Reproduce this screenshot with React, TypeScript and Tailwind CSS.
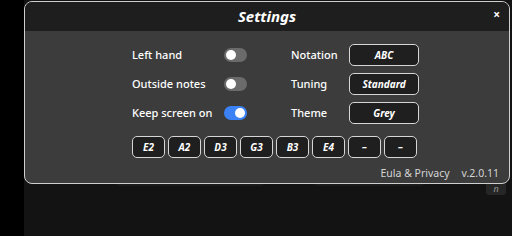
const toggles = [
  { label: "Left hand", on: false, right: "Notation", value: "ABC" },
  { label: "Outside notes", on: false, right: "Tuning", value: "Standard" },
  { label: "Keep screen on", on: true, right: "Theme", value: "Grey" },
];

const strings = ["E2", "A2", "D3", "G3", "B3", "E4", "–", "–"];

function Toggle({ on }: { on: boolean }) {
  return (
    <div
      className={`w-[23px] h-[14px] rounded-full flex items-center px-[2px] ${
        on ? "bg-[#3b82f6] justify-end" : "bg-[#6b6b6b] justify-start"
      }`}
    >
      <div className="w-[10px] h-[10px] rounded-full bg-white" />
    </div>
  );
}

export default function App() {
  return (
    <div
      className="relative w-[512px] h-[236px] bg-black flex overflow-hidden"
      style={{ fontFamily: '"Noto Sans", "Open Sans", sans-serif' }}
    >
      <div className="w-[24px] shrink-0" />
      <div className="relative flex-1 bg-[#131313]">
        <div className="absolute left-[91px] top-[180px] w-[150px] h-[6px] rounded-b-[5px] bg-[#1c1c1c]" />
        <div className="absolute left-[289px] top-[180px] w-[112px] h-[6px] rounded-b-[5px] bg-[#1c1c1c]" />
        <div className="absolute left-[462px] top-[182px] w-[20px] h-[13px] rounded-[3px] bg-[#262626] text-[#9a9a9a] text-[9px] italic leading-[13px] text-center">
          n
        </div>
      </div>

      <div className="absolute left-[24px] top-[1px] w-[486px] h-[183px] border border-[#cfcfcf] rounded-[8px] overflow-hidden bg-[#3c3c3c] flex flex-col text-white">
        <div className="h-[29px] bg-[#1e1e1e] flex items-center justify-center relative">
          <span className="italic font-bold text-[15px]">Settings</span>
          <span className="absolute right-[9px] top-[7px] text-[12px] font-bold leading-none">×</span>
        </div>

        <div className="flex flex-col pl-[107px] pt-[13px] gap-[7px]">
          {toggles.map((t) => (
            <div key={t.label} className="flex items-center h-[22px]">
              <span className="w-[92px] text-[11px] font-medium">{t.label}</span>
              <Toggle on={t.on} />
              <span className="ml-[44px] w-[58px] text-[11px] font-medium">{t.right}</span>
              <div className="w-[70px] h-[22px] border-[1.5px] border-[#d6d6d6] rounded-[5px] bg-[#1f1f1f] flex items-center justify-center italic font-bold text-[10px]">
                {t.value}
              </div>
            </div>
          ))}
        </div>

        <div className="flex gap-[3px] pl-[107px] mt-[12px]">
          {strings.map((s, i) => (
            <div
              key={i}
              className="w-[33px] h-[22px] border-[1.5px] border-[#d6d6d6] rounded-[5px] bg-[#1f1f1f] flex items-center justify-center italic font-bold text-[10px]"
            >
              {s}
            </div>
          ))}
        </div>

        <div className="flex justify-end gap-[12px] pr-[10px] mt-[8px] text-[10.5px] text-[#d4d4d4]">
          <span>Eula &amp; Privacy</span>
          <span>v.2.0.11</span>
        </div>
      </div>
    </div>
  );
}
